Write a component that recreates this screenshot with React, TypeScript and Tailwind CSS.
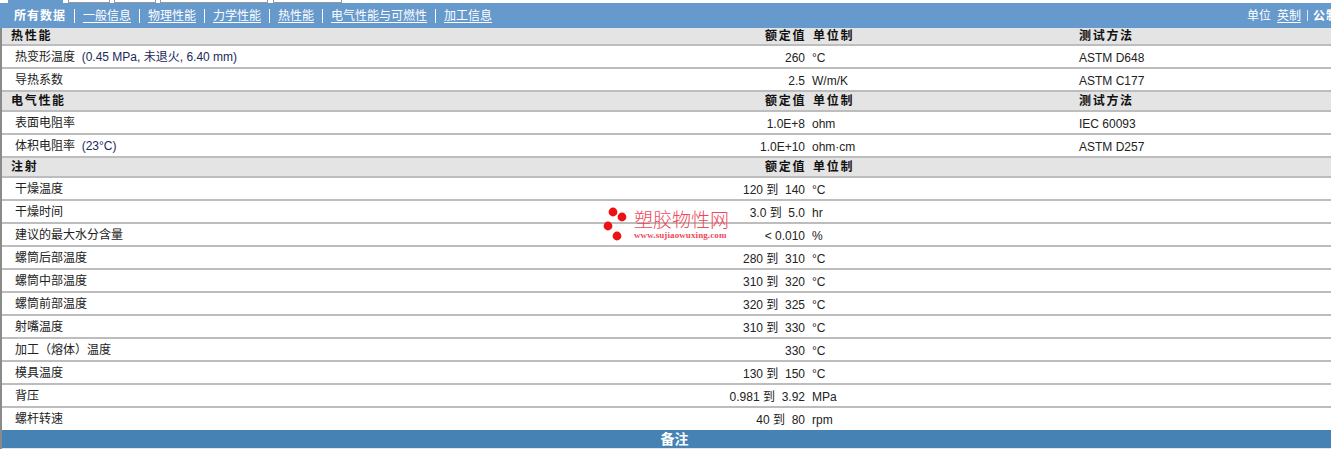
const FONT = "font-['Liberation_Sans','Noto_Sans_CJK_SC',sans-serif]";

type R = { l: string; p?: string; v: string; u: string; m?: string };
type S = { t: string; m?: boolean; h: string; rows: R[] };

const sections: S[] = [
  {
    t: "热性能", m: true, h: "h-[18px]",
    rows: [
      { l: "热变形温度", p: "(0.45 MPa, 未退火, 6.40 mm)", v: "260", u: "°C", m: "ASTM D648" },
      { l: "导热系数", v: "2.5", u: "W/m/K", m: "ASTM C177" },
    ],
  },
  {
    t: "电气性能", m: true, h: "h-[20px]",
    rows: [
      { l: "表面电阻率", v: "1.0E+8", u: "ohm", m: "IEC 60093" },
      { l: "体积电阻率", p: "(23°C)", v: "1.0E+10", u: "ohm·cm", m: "ASTM D257" },
    ],
  },
  {
    t: "注射", h: "h-[20px]",
    rows: [
      { l: "干燥温度", v: "120 到  140", u: "°C" },
      { l: "干燥时间", v: "3.0 到  5.0", u: "hr" },
      { l: "建议的最大水分含量", v: "< 0.010", u: "%" },
      { l: "螺筒后部温度", v: "280 到  310", u: "°C" },
      { l: "螺筒中部温度", v: "310 到  320", u: "°C" },
      { l: "螺筒前部温度", v: "320 到  325", u: "°C" },
      { l: "射嘴温度", v: "310 到  330", u: "°C" },
      { l: "加工（熔体）温度", v: "330", u: "°C" },
      { l: "模具温度", v: "130 到  150", u: "°C" },
      { l: "背压", v: "0.981 到  3.92", u: "MPa" },
      { l: "螺杆转速", v: "40 到  80", u: "rpm" },
    ],
  },
];

const tabs = ["一般信息", "物理性能", "力学性能", "热性能", "电气性能与可燃性", "加工信息"];

function Row({ r, end }: { r: R; end: boolean }) {
  return (
    <div
      className={
        end
          ? "flex h-[22px] items-center bg-white pb-[1px] text-[12px] text-[#222]"
          : "flex h-[23px] items-center border-b-2 border-[#bdbdbd] bg-white text-[12px] text-[#222]"
      }
    >
      <div className="flex w-[803px] shrink-0 items-center justify-between pl-[13px]">
        <div className="whitespace-pre">
          {r.l}
          {r.p && <span className="text-[#1a2a5a]">  {r.p}</span>}
        </div>
        <div className="mt-[2px] whitespace-pre">{r.v}</div>
      </div>
      <div className="mt-[2px] ml-[7px] w-[267px] shrink-0">{r.u}</div>
      <div className="mt-[2px]">{r.m}</div>
    </div>
  );
}

export default function App() {
  return (
    <div className={`${FONT} relative h-[449px] w-[1331px] overflow-hidden bg-white`}>
      <div className="flex h-[3px] bg-white pl-[8px]">
        <div className="h-[3px] w-[55px] bg-[#6699cc]" />
        <div className="ml-[5px] h-[3px] w-[42px] border-x border-b border-[#999]" />
        <div className="ml-[4px] h-[3px] w-[42px] border-x border-b border-[#999]" />
        <div className="ml-[4px] h-[3px] w-[108px] border-x border-b border-[#999]" />
        <div className="ml-[5px] h-[3px] w-[69px] border-x border-b border-[#999]" />
      </div>
      <div className="relative flex h-[25px] items-center bg-[#6699cc] pl-[14px] text-[12px] text-white">
        <span className="font-bold tracking-[1px]">所有数据</span>
        {tabs.map((t) => (
          <span key={t} className="flex items-center">
            <span className="mx-[8px] h-[14px] w-px bg-white" />
            <span className="underline underline-offset-2">{t}</span>
          </span>
        ))}
        <div className="ml-auto flex w-[84px] shrink-0 items-center whitespace-nowrap">
          <span>单位</span>
          <span className="ml-[6px] underline underline-offset-2">英制</span>
          <span className="ml-[6px] mr-[5px] h-[11px] w-px shrink-0 bg-[#dfe9f4]" />
          <span className="font-bold tracking-[1px]">公制</span>
        </div>
      </div>
      <div className="border-l-2 border-[#8a8a8a]">
        {sections.map((s, si) => (
          <div key={s.t}>
            <div className={`${s.h} flex items-center border-b-2 border-[#bdbdbd] bg-[#e4e4e4] text-[12px] font-bold tracking-[1.7px] text-[#111]`}>
              <div className="w-[763px] shrink-0 pl-[9px]">{s.t}</div>
              <div className="w-[48px] shrink-0">额定值</div>
              <div className="w-[266px] shrink-0">单位制</div>
              <div>{s.m && "测试方法"}</div>
            </div>
            {s.rows.map((r, ri) => (
              <Row key={r.l} r={r} end={si === sections.length - 1 && ri === s.rows.length - 1} />
            ))}
          </div>
        ))}
        <div className="flex h-[18px] items-center justify-center bg-[#4682b4] pl-[16px] text-[14px] font-bold text-white">
          备注
        </div>
        <div className="h-[1px] bg-[#e4e4e4]" />
      </div>
      <div className="absolute left-[603px] top-[207px] flex items-start">
        <svg width="26" height="34" viewBox="0 0 26 34">
          <circle cx="10" cy="5" r="4.4" fill="#ee1111" />
          <circle cx="19" cy="10" r="4.4" fill="#ee1111" />
          <circle cx="5" cy="19" r="4.4" fill="#ee1111" />
          <circle cx="14" cy="29" r="4.4" fill="#ee1111" />
        </svg>
        <div className="ml-[5px] mt-[3px] flex flex-col items-start text-[#f04858]">
          <span className="text-[19px] font-light leading-[21px]">塑胶物性网</span>
          <span className="font-['Liberation_Serif',serif] text-[9px] font-bold leading-[8px] tracking-[0.1px]">www.sujiaowuxing.com</span>
        </div>
      </div>
    </div>
  );
}
